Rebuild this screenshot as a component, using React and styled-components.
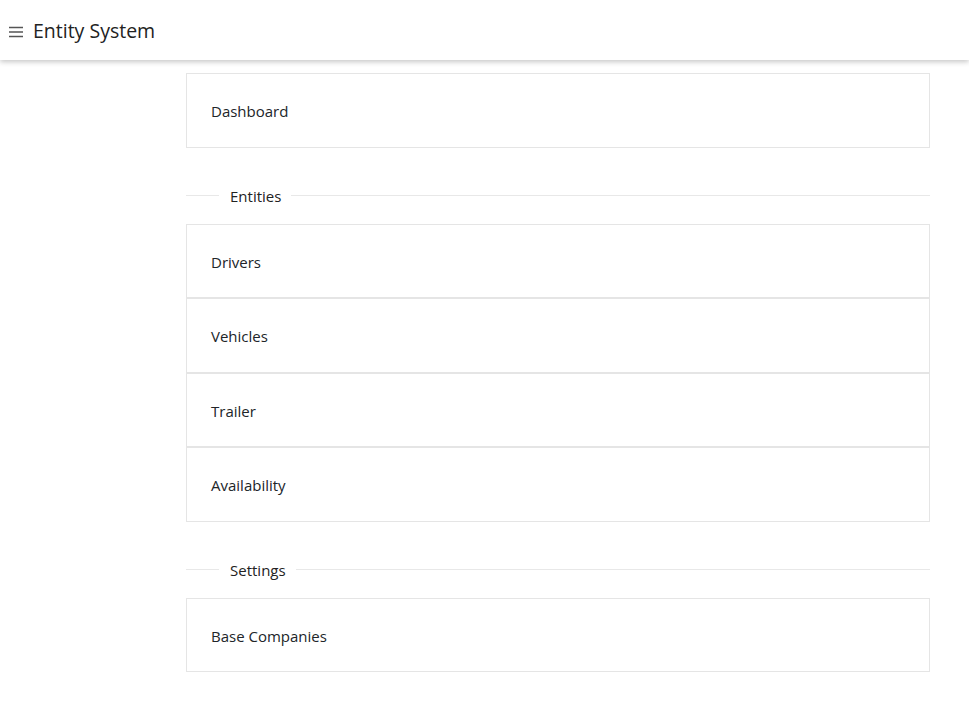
import React from 'react'
import styled, {createGlobalStyle} from 'styled-components'

const GlobalStyle = createGlobalStyle`
  body {
    margin: 0;
    background: #ffffff;
    font-family: "Open Sans", "Noto Sans", sans-serif;
    color: #212529;
  }
`

const sections = [
  {title: null, items: ['Dashboard']},
  {title: 'Entities', items: ['Drivers', 'Vehicles', 'Trailer', 'Availability']},
  {title: 'Settings', items: ['Base Companies']},
]

function MenuIcon() {
  return (
    <svg width="16" height="14" viewBox="0 0 16 14">
      <g stroke="#555" strokeWidth="1.5">
        <line x1="1" y1="2.5" x2="15" y2="2.5" />
        <line x1="1" y1="7" x2="15" y2="7" />
        <line x1="1" y1="11.5" x2="15" y2="11.5" />
      </g>
    </svg>
  )
}

export default function App() {
  return (
    <>
      <GlobalStyle />
      <Header>
        <MenuButton><MenuIcon /></MenuButton>
        <Title>Entity System</Title>
      </Header>
      <Content>
        {sections.map((section, i) => (
          <Section key={i}>
            {section.title && (
              <Divider>
                <span>{section.title}</span>
              </Divider>
            )}
            {section.items.map(item => (
              <Card key={item}>{item}</Card>
            ))}
          </Section>
        ))}
      </Content>
    </>
  )
}

const Header = styled.header`
  height: 60px;
  display: flex;
  align-items: center;
  gap: 9px;
  padding: 0 8px;
  background: #fff;
  box-shadow: 0 2px 5px rgba(0, 0, 0, 0.22);
  position: relative;
  z-index: 1;
`

const MenuButton = styled.div`
  display: flex;
  align-items: center;
  padding-top: 4px;
`

const Title = styled.h1`
  margin: 0;
  font-size: 19.5px;
  font-weight: 400;
  color: #222;
`

const Content = styled.main`
  padding: 13px 39px 40px 186px;
`

const Section = styled.section`
  display: flex;
  flex-direction: column;
`

const Divider = styled.div`
  display: flex;
  align-items: center;
  height: 22px;
  margin: 37px 0 17px;
  font-size: 15px;
  color: #222;
  &::before, &::after {
    content: '';
    height: 1px;
    background: #e8e8e8;
  }
  &::before {
    width: 33px;
  }
  &::after {
    flex: 1;
  }
  span {
    padding: 0 10px 0 11px;
  }
`

const Card = styled.div`
  border: 1px solid #e5e5e5;
  padding: 26px 24px 24px;
  font-size: 15px;
  line-height: 1.5;
  color: #212529;
  background: #fff;
`
